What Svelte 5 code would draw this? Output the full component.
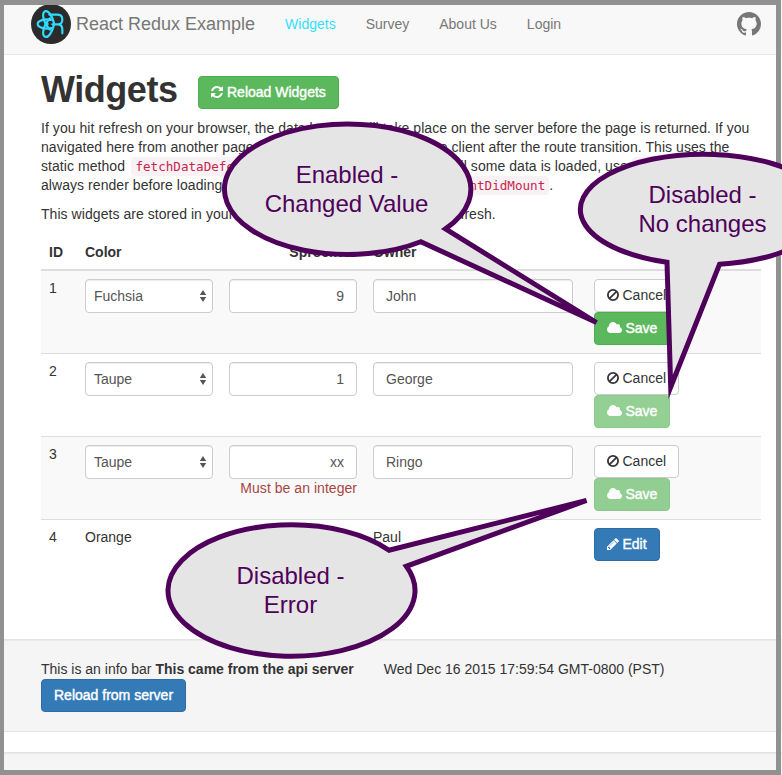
<script>
  const links = ['Widgets', 'Survey', 'About Us', 'Login'];
  const widgets = [
    { id: 1, color: 'Fuchsia', sprockets: '9', owner: 'John', editing: true, canSave: true },
    { id: 2, color: 'Taupe', sprockets: '1', owner: 'George', editing: true, canSave: false },
    { id: 3, color: 'Taupe', sprockets: 'xx', owner: 'Ringo', editing: true, canSave: false, error: 'Must be an integer' },
    { id: 4, color: 'Orange', sprockets: '7', owner: 'Paul', editing: false }
  ];
</script>

<div class="page">
  <header>
    <div class="brand">
      <svg class="logo" width="40" height="40" viewBox="0 0 120 120">
        <circle cx="60" cy="60" r="60" fill="#2b2b2b" />
        <g fill="none" stroke="#2fdcff" stroke-width="6.5" stroke-linecap="round" stroke-linejoin="round">
          <path d="M60 48C42 43 20 50 20 60S42 77 61 72" />
          <path d="M57 77C37 57 31 27 42 22S65 40 69 58" />
          <path d="M57 43C37 63 31 93 42 98S65 80 69 62" />
          <path d="M55 32H80Q94 32 94 47T80 61H64M80 61Q94 61 94 76V88" />
        </g>
        <circle cx="48" cy="60" r="5" fill="#2fdcff" />
      </svg>
      <span>React Redux Example</span>
    </div>
    <nav>
      {#each links as link, i}
        <a class:active={i === 0}>{link}</a>
      {/each}
    </nav>
    <svg class="github" width="24" height="24" viewBox="0 0 16 16" fill="#777">
      <path d="M8 0C3.58 0 0 3.58 0 8c0 3.54 2.29 6.53 5.47 7.59.4.07.55-.17.55-.38 0-.19-.01-.82-.01-1.49-2.01.37-2.53-.49-2.69-.94-.09-.23-.48-.94-.82-1.13-.28-.15-.68-.52-.01-.53.63-.01 1.08.58 1.23.82.72 1.21 1.87.87 2.33.66.07-.52.28-.87.51-1.07-1.78-.2-3.64-.89-3.64-3.95 0-.87.31-1.59.82-2.15-.08-.2-.36-1.02.08-2.12 0 0 .67-.21 2.2.82.64-.18 1.32-.27 2-.27s1.36.09 2 .27c1.53-1.04 2.2-.82 2.2-.82.44 1.1.16 1.92.08 2.12.51.56.82 1.27.82 2.15 0 3.07-1.87 3.75-3.65 3.95.29.25.54.73.54 1.48 0 1.07-.01 1.93-.01 2.2 0 .21.15.46.55.38A8.01 8.01 0 0 0 16 8c0-4.42-3.58-8-8-8z" />
    </svg>
  </header>

  <main>
    <div class="title">
      <h1>Widgets</h1>
      <button class="btn success">
        <svg width="12" height="14" viewBox="128 0 1536 1792"><path d="M1639 1056q0 5-1 7-64 268-268 434.500t-478 166.500q-146 0-282.500-55t-243.500-157l-129 129q-19 19-45 19t-45-19-19-45v-448q0-26 19-45t45-19h448q26 0 45 19t19 45-19 45l-137 137q71 66 161 102t187 36q134 0 250-65t186-179q11-17 53-117 8-23 30-23h192q13 0 22.500 9.500t9.500 22.500zm25-800v448q0 26-19 45t-45 19h-448q-26 0-45-19t-19-45 19-45l138-138q-148-137-349-137-134 0-250 65t-186 179q-11 17-53 117-8 23-30 23h-199q-13 0-22.500-9.500t-9.500-22.500v-7q65-268 270-434.500t480-166.500q146 0 284 55.500t245 156.500l130-129q19-19 45-19t45 19 19 45z" /></svg>
        Reload Widgets
      </button>
    </div>
    <p>
      If you hit refresh on your browser, the data loading will take place on the server before the page is returned. If you<br />
      navigated here from another page, the data was fetched from the client after the route transition. This uses the<br />
      static method <code class="lead">fetchDataDeferred</code>. To block a route transition until some data is loaded, use <code>fetchData</code>. To<br />
      always render before loading data, even on the server, use <code>componentDidMount</code>.
    </p>
    <p>This widgets are stored in your session, so feel free to edit it and refresh.</p>

    <table>
      <colgroup><col class="c-id" /><col class="c-color" /><col class="c-num" /><col class="c-owner" /><col /></colgroup>
      <thead>
        <tr><th>ID</th><th>Color</th><th class="num">Sprockets</th><th>Owner</th><th></th></tr>
      </thead>
      <tbody>
        {#each widgets as w}
          <tr>
            <td>{w.id}</td>
            {#if w.editing}
              <td>
                <div class="control select">
                  {w.color}
                  <svg width="8" height="12" viewBox="0 0 8 12" fill="#555"><path d="M4 0L7.200 5H.8zM4 12L.8 7H7.200z" /></svg>
                </div>
              </td>
              <td class="num">
                <div class="control">{w.sprockets}</div>
                {#if w.error}<div class="error">{w.error}</div>{/if}
              </td>
              <td><div class="control owner">{w.owner}</div></td>
              <td class="actions">
                <button class="btn default">
                  <svg width="12" height="14" viewBox="0 0 12 14"><g fill="none" stroke="#333" stroke-width="1.8"><circle cx="6" cy="7" r="5.1" /><path d="M2.400 10.600L9.600 3.400" /></g></svg>
                  Cancel
                </button>
                <button class="btn success" class:disabled={!w.canSave}>
                  <svg width="15" height="14" viewBox="0 0 1920 1792"><path d="M1920 1152q0 159-112.500 271.500t-271.500 112.500h-1088q-185 0-316.500-131.500t-131.500-316.500q0-132 71-241.500t187-163.500q-2-28-2-43 0-212 150-362t362-150q158 0 286.500 88t187.500 230q70-62 166-62 106 0 181 75t75 181q0 75-41 138 129 30 213 134.500t84 239.500z" /></svg>
                  Save
                </button>
              </td>
            {:else}
              <td>{w.color}</td>
              <td class="num">{w.sprockets}</td>
              <td>{w.owner}</td>
              <td class="actions">
                <button class="btn primary">
                  <svg width="12" height="14" viewBox="128 0 1536 1792"><path d="M491 1536l91-91-235-235-91 91v107h128v128h107zm523-928q0-22-22-22-10 0-17 7l-542 542q-7 7-7 17 0 22 22 22 10 0 17-7l542-542q7-7 7-17zm-54-192l416 416-832 832h-416v-416zm683 96q0 53-37 90l-166 166-416-416 166-165q36-38 90-38 53 0 91 38l235 234q37 39 37 91z" /></svg>
                  Edit
                </button>
              </td>
            {/if}
          </tr>
        {/each}
      </tbody>
    </table>
  </main>

  <section class="well info">
    <div class="line"><span>This is an info bar <strong>This came from the api server</strong></span><span>Wed Dec 16 2015 17:59:54 GMT-0800 (PST)</span></div>
    <button class="btn primary">Reload from server</button>
  </section>
  <section class="well last"></section>

  <div class="frame"></div>

  <svg class="callouts" width="782" height="775" viewBox="0 0 782 775">
    <g fill="#e5e5e5" stroke="#4f005a" stroke-width="5" stroke-miterlimit="10">
      <path d="M420.800 241.770A123.200 65.300 0 1 1 445.500 228.900L596.500 322.500Z" />
      <path d="M667 262.300A123.200 55.300 0 1 1 719.500 264.330L670.700 387Z" />
      <path d="M389 550.200A123.500 65.700 0 1 0 406.300 566.300L586.500 500.500Z" />
    </g>
    <g class="notes">
      <text x="347" y="183">Enabled -</text>
      <text x="346.500" y="212">Changed Value</text>
      <text x="702.500" y="203">Disabled -</text>
      <text x="702.500" y="232">No changes</text>
      <text x="290.500" y="584">Disabled -</text>
      <text x="290.500" y="613">Error</text>
    </g>
  </svg>
</div>

<style>
  .page {
    position: relative;
    width: 782px;
    height: 775px;
    overflow: hidden;
    display: flex;
    flex-direction: column;
    background: #fff;
    color: #333;
    font: 14px/19px 'Liberation Sans', Arial, sans-serif;
  }
  header {
    flex: none;
    display: flex;
    align-items: flex-start;
    height: 54px;
    padding: 0 21px 0 31px;
    background: #f8f8f8;
    border-bottom: 1px solid #e7e7e7;
    color: #777;
  }
  .brand {
    display: flex;
    gap: 5px;
    font-size: 18px;
    line-height: 20px;
  }
  .logo { margin-top: 4px; }
  .brand span { margin-top: 14px; }
  nav {
    display: flex;
    margin: 15px auto 0 15px;
  }
  nav a { padding: 0 15px; }
  nav .active { color: #33e0ff; }
  .github { margin-top: 12px; }
  main {
    flex: none;
    box-sizing: border-box;
    height: 584px;
    padding: 14px 21px 0 41px;
  }
  .title {
    display: flex;
    align-items: flex-start;
    height: 50px;
  }
  h1 {
    width: 157px;
    margin: 1px 0 0;
    font-size: 36px;
    line-height: 40px;
    font-weight: bold;
    letter-spacing: -0.45px;
  }
  .title .btn { margin-top: 7px; }
  p {
    margin: 0 0 10px;
    white-space: nowrap;
    letter-spacing: 0.055px;
  }
  code {
    padding: 2px 4px;
    border-radius: 4px;
    background: #f9f2f4;
    color: #c7254e;
    font: 12.6px/15px 'DejaVu Sans Mono', monospace;
    letter-spacing: 0;
  }
  .lead { margin-left: 2.500px; }
  .btn {
    display: flex;
    align-items: center;
    box-sizing: border-box;
    height: 33px;
    padding: 0 12px;
    gap: 4px;
    border: 1px solid;
    border-radius: 4px;
    font: 14px/19px 'Liberation Sans', Arial, sans-serif;
    color: #fff;
    white-space: nowrap;
  }
  .actions .btn { gap: 3.500px; }
  .btn svg {
    margin-bottom: 2px;
    fill: currentColor;
    overflow: visible;
  }
  .success { background: #5cb85c; border-color: #4cae4c; -webkit-text-stroke: 0.4px #fff; }
  .primary { background: #337ab7; border-color: #2e6da4; -webkit-text-stroke: 0.4px #fff; }
  .default { background: #fff; border-color: #ccc; color: #333; }
  .disabled { opacity: 0.65; }
  table {
    width: 720px;
    margin-top: 11px;
    table-layout: fixed;
    border-collapse: separate;
    border-spacing: 0;
  }
  .c-id { width: 36px; }
  .c-color, .c-num { width: 144px; }
  .c-owner { width: 221px; }
  th {
    height: 19px;
    padding: 8px 8px 7px;
    border-bottom: 2px solid #ddd;
    text-align: left;
  }
  td {
    padding: 8px;
    border-top: 1px solid #ddd;
    vertical-align: top;
  }
  tbody tr:first-child td { border-top: 0; }
  tbody tr:nth-child(odd) { background: #f9f9f9; }
  .num { text-align: right; }
  .control {
    box-sizing: border-box;
    height: 34px;
    padding: 7px 12px;
    border: 1px solid #ccc;
    border-radius: 4px;
    background: #fff;
    box-shadow: inset 0 1px 1px rgba(0, 0, 0, 0.075);
    color: #555;
  }
  .select {
    display: flex;
    justify-content: space-between;
    align-items: center;
    padding: 0 5px 0 8px;
  }
  .owner { width: 200px; }
  .error { color: #a94442; letter-spacing: 0.04px; }
  .well {
    flex: none;
    box-sizing: border-box;
    border: 1px solid #e3e3e3;
    border-width: 1px 0;
    background: #f5f5f5;
    box-shadow: inset 0 1px 1px rgba(0, 0, 0, 0.05);
  }
  .info {
    height: 93px;
    margin-bottom: 20px;
    padding: 20px 41px 0;
  }
  .line { display: flex; gap: 30px; }
  .last { height: 60px; }
  .frame {
    position: absolute;
    inset: 0 1px 0 0;
    border: solid #919191;
    border-width: 5px 5px 5px 4px;
  }
  .callouts {
    position: absolute;
    inset: 0;
  }
  .notes {
    fill: #4f005a;
    font-size: 24px;
    text-anchor: middle;
  }
</style>
